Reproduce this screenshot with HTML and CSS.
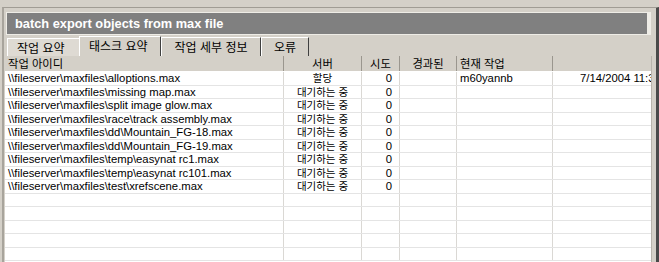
FILE: index.html
```html
<!DOCTYPE html>
<html lang="ko">
<head>
    <meta charset="UTF-8">
    <title>batch export objects from max file</title>
    <link rel="stylesheet" href="styles.css">
</head>
<body>
    <div class="frame">
        <div class="title">batch export objects from max file</div>

        <div class="tabs">
            <div class="tab tab-first">작업 요약</div>
            <div class="tab tab-active">태스크 요약</div>
            <div class="tab tab-detail">작업 세부 정보</div>
            <div class="tab tab-error">오류</div>
        </div>

        <div class="list">
            <div class="row head">
                <div class="cell left">작업 아이디</div>
                <div class="cell center">서버</div>
                <div class="cell center">시도</div>
                <div class="cell center">경과된</div>
                <div class="cell left">현재 작업</div>
                <div class="cell"></div>
            </div>
            <div class="row">
                <div class="cell left">\\fileserver\maxfiles\alloptions.max</div>
                <div class="cell center">할당</div>
                <div class="cell right">0</div>
                <div class="cell"></div>
                <div class="cell left">m60yannb</div>
                <div class="cell time">7/14/2004 11:32 AM</div>
            </div>
            <div class="row">
                <div class="cell left">\\fileserver\maxfiles\missing map.max</div>
                <div class="cell center">대기하는 중</div>
                <div class="cell right">0</div>
                <div class="cell"></div><div class="cell"></div><div class="cell"></div>
            </div>
            <div class="row">
                <div class="cell left">\\fileserver\maxfiles\split image glow.max</div>
                <div class="cell center">대기하는 중</div>
                <div class="cell right">0</div>
                <div class="cell"></div><div class="cell"></div><div class="cell"></div>
            </div>
            <div class="row">
                <div class="cell left">\\fileserver\maxfiles\race\track assembly.max</div>
                <div class="cell center">대기하는 중</div>
                <div class="cell right">0</div>
                <div class="cell"></div><div class="cell"></div><div class="cell"></div>
            </div>
            <div class="row">
                <div class="cell left">\\fileserver\maxfiles\dd\Mountain_FG-18.max</div>
                <div class="cell center">대기하는 중</div>
                <div class="cell right">0</div>
                <div class="cell"></div><div class="cell"></div><div class="cell"></div>
            </div>
            <div class="row">
                <div class="cell left">\\fileserver\maxfiles\dd\Mountain_FG-19.max</div>
                <div class="cell center">대기하는 중</div>
                <div class="cell right">0</div>
                <div class="cell"></div><div class="cell"></div><div class="cell"></div>
            </div>
            <div class="row">
                <div class="cell left">\\fileserver\maxfiles\temp\easynat rc1.max</div>
                <div class="cell center">대기하는 중</div>
                <div class="cell right">0</div>
                <div class="cell"></div><div class="cell"></div><div class="cell"></div>
            </div>
            <div class="row">
                <div class="cell left">\\fileserver\maxfiles\temp\easynat rc101.max</div>
                <div class="cell center">대기하는 중</div>
                <div class="cell right">0</div>
                <div class="cell"></div><div class="cell"></div><div class="cell"></div>
            </div>
            <div class="row">
                <div class="cell left">\\fileserver\maxfiles\test\xrefscene.max</div>
                <div class="cell center">대기하는 중</div>
                <div class="cell right">0</div>
                <div class="cell"></div><div class="cell"></div><div class="cell"></div>
            </div>
            <div class="row"><div class="cell"></div><div class="cell"></div><div class="cell"></div><div class="cell"></div><div class="cell"></div><div class="cell"></div></div>
            <div class="row"><div class="cell"></div><div class="cell"></div><div class="cell"></div><div class="cell"></div><div class="cell"></div><div class="cell"></div></div>
            <div class="row"><div class="cell"></div><div class="cell"></div><div class="cell"></div><div class="cell"></div><div class="cell"></div><div class="cell"></div></div>
            <div class="row"><div class="cell"></div><div class="cell"></div><div class="cell"></div><div class="cell"></div><div class="cell"></div><div class="cell"></div></div>
            <div class="row"><div class="cell"></div><div class="cell"></div><div class="cell"></div><div class="cell"></div><div class="cell"></div><div class="cell"></div></div>
        </div>
    </div>
</body>
</html>
```

FILE: styles.css
```css
html, body {
    margin: 0;
    height: 262px;
    overflow: hidden;
}
body {
    background-color: #d4d0c8;
    font-family: "Liberation Sans", "Noto Sans CJK KR", sans-serif;
    font-size: 11.3px;
    color: #000;
}
.frame {
    margin: 7px 0 0 2px;
    width: 652px;
    height: 262px;
    border-top: 1px solid #a09c94;
    border-left: 2px solid #a8a49c;
    border-right: 3px solid #4a4a4a;
}
.title {
    margin: 4px 0 0 2px;
    width: 632px;
    height: 21px;
    line-height: 21px;
    padding-left: 8px;
    background-color: #808080;
    border: 1px solid #eeece6;
    border-right-width: 4px;
    color: #fff;
    font-weight: bold;
    font-size: 12.8px;
}
.tabs {
    display: flex;
    margin: 2px 0 0 3px;
    height: 19px;
}
.tab {
    font-family: "Noto Sans CJK KR", sans-serif;
    font-size: 12px;
    line-height: 17px;
    padding: 0 9px;
    border-top: 1px solid #fff;
    border-left: 1px solid #fff;
    border-right: 1px solid #404040;
    background-color: #d4d0c8;
}
.tab-first {
    width: 53px;
    background-color: #dedad3;
    border-right: none;
    margin-top: 1px;
}
.tab-active {
    width: 62px;
    line-height: 18px;
    margin-top: -1px;
}
.tab-detail {
    width: 80px;
    text-align: center;
}
.tab-error {
    width: 28px;
    text-align: center;
}
.list {
    margin-left: 1px;
    width: 646px;
    height: 210px;
    background-color: #fff;
    border-right: 1px solid #b8b4ac;
    overflow: hidden;
}
.row {
    display: grid;
    grid-template-columns: 279px 78px 38px 57px 96px 160px;
    height: 13.5px;
    box-sizing: border-box;
    border-bottom: 1px solid #e4e4e4;
}
.cell {
    border-right: 1px solid #dad8d4;
    white-space: nowrap;
    line-height: 12px;
}
.head {
    height: 16px;
    background-color: #d4d0c8;
    border-bottom: 1px solid #ffffff;
    font-family: "Noto Sans CJK KR", sans-serif;
}
.head .cell {
    line-height: 15px;
    border-right: 1px solid #9a968e;
}
.row:not(.head) .cell:nth-child(2) {
    font-family: "Noto Sans CJK KR", sans-serif;
    font-size: 10.5px;
}
.left {
    padding-left: 3px;
}
.center {
    text-align: center;
}
.right {
    text-align: right;
    padding-right: 7px;
}
.time {
    padding-left: 27px;
}
```
